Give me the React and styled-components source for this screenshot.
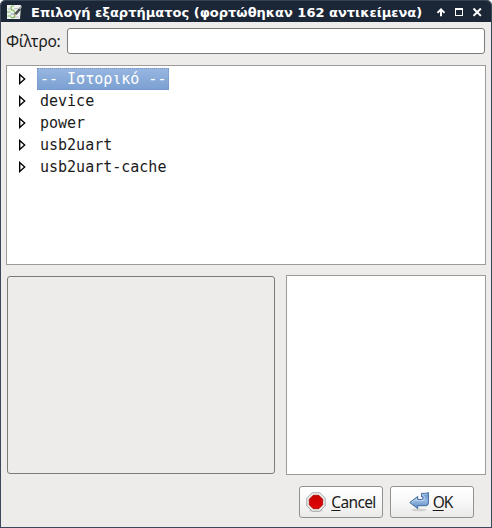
import React from "react";
import styled, { createGlobalStyle, css } from "styled-components";

const GlobalStyle = createGlobalStyle`
  * { box-sizing: border-box; }
  body { margin: 0; background: #fff; overflow: hidden; }
`;

const Window = styled.div`
  width: 492px;
  height: 528px;
  display: flex;
  flex-direction: column;
  background: #edecea;
  border: 1px solid #3d4759;
  border-top-color: #364353;
  border-radius: 5px 5px 0 0;
  overflow: hidden;
  color: #1a1a1a;
  font-family: "Noto Sans", sans-serif;
  font-size: 15.5px;
`;

const TitleBar = styled.header`
  flex: none;
  height: 21px;
  display: flex;
  align-items: center;
  padding: 0 9px 0 5px;
  background: #1b2637;
  color: #fff;
`;

const Title = styled.h1`
  flex: 1;
  margin: 2px 0 0 9px;
  font: bold 13px/18px "DejaVu Sans", sans-serif;
  white-space: nowrap;
`;

const WindowControls = styled.div`
  display: flex;
  gap: 9px;
  margin-top: 2px;
`;

const Content = styled.main`
  flex: 1;
  display: flex;
  flex-direction: column;
  padding: 6px 5px 9px;
`;

const FilterRow = styled.label`
  display: flex;
  align-items: center;
  height: 26px;
  padding-right: 1px;
`;

const FilterLabel = styled.span`
  width: 61px;
  line-height: 20px;
  letter-spacing: -0.28px;
  white-space: nowrap;
`;

const FilterInput = styled.input`
  flex: 1;
  min-width: 0;
  height: 26px;
  padding: 0 6px;
  border: 1px solid #7c7b79;
  border-radius: 3px;
  background: #fff;
  font: inherit;
  outline: none;
`;

const sunken = css`
  border: 1px solid #9e9a97;
  background: #fff;
`;

const Tree = styled.ul`
  ${sunken}
  height: 200px;
  margin: 11px 0 0;
  padding: 2px 0 0 11px;
  list-style: none;
`;

const TreeItem = styled.li`
  display: flex;
  align-items: center;
  gap: 10px;
  height: 22px;
  font: 15px/18px "DejaVu Sans Mono", monospace;
`;

const ItemName = styled.span`
  height: 22px;
  padding: 1px 2px 0;
  border: 1px dotted transparent;
  white-space: pre;
  ${(p) =>
    p.$selected &&
    css`
      color: #fff;
      border-color: #6f95ca;
      background: linear-gradient(#98b7e1, #7a9fd1) border-box;
    `}
`;

const Panels = styled.section`
  display: flex;
  justify-content: space-between;
  height: 200px;
  margin-top: 10px;
`;

const Description = styled.div`
  width: 268px;
  height: 198px;
  margin: 1px;
  border: 1px solid #7c7b79;
  border-radius: 3px;
`;

const Preview = styled.div`
  ${sunken}
  width: 200px;
`;

const Actions = styled.footer`
  display: flex;
  justify-content: flex-end;
  gap: 7px;
  margin-top: 11px;
  padding-right: 12px;
`;

const Button = styled.button`
  display: flex;
  align-items: center;
  justify-content: center;
  width: 84px;
  height: 32px;
  padding: 0 ${(p) => p.$inset}px 0 0;
  gap: ${(p) => p.$gap}px;
  border: 1px solid #94928f;
  border-radius: 3px;
  background: linear-gradient(#fff, #f8f8f8 50%, #eaeae9);
  color: #1a1a1a;
  font: 15.5px/20px "Noto Sans", sans-serif;
`;

const ButtonText = styled.span`
  margin-top: -1px;
  letter-spacing: ${(p) => p.$spacing}px;
`;

const Mnemonic = styled.span`
  text-decoration: underline;
  text-decoration-thickness: 1px;
  text-underline-offset: 2px;
  text-decoration-skip-ink: none;
`;

const AppIcon = () => (
  <svg width="16" height="16" viewBox="0 0 16 16">
    <path d="M1 1h14l-1 14H1z" fill="#f1f3f1" />
    <path d="M5 5.5V3.2q0-1.2 1.3-1.2H8M1 8h3.5M5 6q3-.5 3.5 2v5q-2 1.5-3.5 0M1.5 12H5" stroke="#7bb653" strokeWidth="1.2" fill="none" />
    <path d="M2 5h3M8.5 4.5h3M9 13h4" stroke="#b7bdc2" fill="none" />
    <path d="M4.5 10h4" stroke="#7f9ac1" />
    <path d="M8.2 11.8l.8-3 4.5-5.2 2 1.5-4.6 5.4z" fill="#4b5055" />
    <path d="M12.8 4.3l2-2.7 1.2 1-1.5 3z" fill="#aeb1b5" />
    <path d="M7.8 12.3l1-2.8 1.4 1.2z" fill="#d2b58a" />
  </svg>
);

const ShadeIcon = () => (
  <svg width="9" height="9" viewBox="0 0 9 9">
    <path d="M4 8.2V2M.5 4.9L4 1.4l3.5 3.5" stroke="#fff" strokeWidth="2" fill="none" />
  </svg>
);

const MaximizeIcon = () => (
  <svg width="9" height="9" viewBox="0 0 9 9" shapeRendering="crispEdges">
    <path d="M.5.5h7v7h-7zM.5 1.5h7" stroke="#fff" fill="none" />
  </svg>
);

const CloseIcon = () => (
  <svg width="9" height="9" viewBox="0 0 9 9">
    <path d="M.5.5l7.4 7.4M7.9.5L.5 7.9" stroke="#fff" strokeWidth="2" />
  </svg>
);

const Expander = () => (
  <svg width="9" height="12" viewBox="0 0 9 12">
    <path d="M1.7 1.5L6.7 6l-5 4.5z" fill="#fff" stroke="#000" strokeWidth="1.35" />
  </svg>
);

const StopIcon = () => (
  <svg width="20" height="20" viewBox="0 0 20 20">
    <defs>
      <linearGradient id="stopRed" x2="0" y2="1">
        <stop stopColor="#c90000" />
        <stop offset="1" stopColor="#e00808" />
      </linearGradient>
    </defs>
    <ellipse cx="10" cy="18.7" rx="7" ry="1.3" fill="#ccc" />
    <path d="M6.3.8h7.4l5.5 5.5v7.4l-5.5 5.5H6.3L.8 13.7V6.3z" fill="#f1f2ef" stroke="#a3a5a1" />
    <path d="M7.2 3.3h5.6l3.9 3.9v5.6l-3.9 3.9H7.2l-3.9-3.9V7.2z" fill="url(#stopRed)" stroke="#a90000" strokeWidth=".8" />
  </svg>
);

const ReturnIcon = () => (
  <svg width="20" height="20" viewBox="0 0 20 20">
    <defs>
      <linearGradient id="arrowBlue" x2="0" y2="1">
        <stop stopColor="#5f8fc9" />
        <stop offset=".5" stopColor="#98bae0" />
        <stop offset="1" stopColor="#5c8ac3" />
      </linearGradient>
    </defs>
    <ellipse cx="10" cy="18" rx="7.5" ry="1.3" fill="#d0d0cf" />
    <path d="M12.6 1.3q3.4.5 6.8-.6v10.2q0 2.8-2.8 2.8H8.7v2.9L.8 10.5l7.9-6v3h3.6q1.7 0 1.7-1.5V4.9h-1.4z" fill="url(#arrowBlue)" stroke="#3d69a3" strokeLinejoin="round" />
    <path d="M2.6 10.5L7.8 6.5v2.1h5.6q1.8 0 1.8-1.8V3.9h-1.6V2.3q2.6.3 4.8-.3" fill="none" stroke="#cfe0f2" strokeWidth=".7" />
  </svg>
);

const items = ["-- Ιστορικό --", "device", "power", "usb2uart", "usb2uart-cache"];

export default function App() {
  return (
    <>
      <GlobalStyle />
      <Window>
        <TitleBar>
          <AppIcon />
          <Title>Επιλογή εξαρτήματος (φορτώθηκαν 162 αντικείμενα)</Title>
          <WindowControls>
            <ShadeIcon />
            <MaximizeIcon />
            <CloseIcon />
          </WindowControls>
        </TitleBar>
        <Content>
          <FilterRow>
            <FilterLabel>Φίλτρο:</FilterLabel>
            <FilterInput />
          </FilterRow>
          <Tree>
            {items.map((name, i) => (
              <TreeItem key={name}>
                <Expander />
                <ItemName $selected={i === 0}>{name}</ItemName>
              </TreeItem>
            ))}
          </Tree>
          <Panels>
            <Description />
            <Preview />
          </Panels>
          <Actions>
            <Button $gap={5} $inset={0}>
              <StopIcon />
              <ButtonText $spacing={-0.65}><Mnemonic>C</Mnemonic>ancel</ButtonText>
            </Button>
            <Button $gap={4} $inset={3}>
              <ReturnIcon />
              <ButtonText $spacing={-1}><Mnemonic>O</Mnemonic>K</ButtonText>
            </Button>
          </Actions>
        </Content>
      </Window>
    </>
  );
}
